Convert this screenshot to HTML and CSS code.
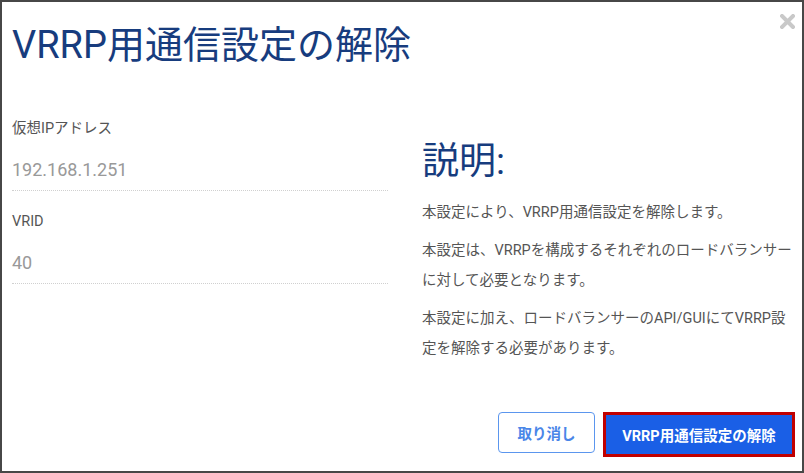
FILE: index.html
```html
<html>
<head>
<meta charset="UTF-8">
<meta name="viewport" content="width=device-width, initial-scale=1.0">
<title>VRRP用通信設定の解除</title>
<link rel="stylesheet" href="styles.css">
</head>
<body>
<div class="dialog">
  <div class="dialog-header">
    <h1 class="dialog-title">VRRP用通信設定の解除</h1>
    <button class="close-button" aria-label="閉じる">
      <svg width="15" height="15" viewBox="0 0 15 15">
        <path d="M2 2 L13 13 M13 2 L2 13" stroke="#c9c9c9" stroke-width="4" stroke-linecap="square"/>
      </svg>
    </button>
  </div>
  <div class="dialog-body">
    <div class="form-column">
      <div class="field">
        <label class="field-label">仮想IPアドレス</label>
        <div class="field-value">192.168.1.251</div>
      </div>
      <div class="field">
        <label class="field-label">VRID</label>
        <div class="field-value">40</div>
      </div>
    </div>
    <div class="help-column">
      <h2 class="help-title">説明:</h2>
      <p>本設定により、VRRP用通信設定を解除します。</p>
      <p>本設定は、VRRPを構成するそれぞれのロードバランサーに対して必要となります。</p>
      <p>本設定に加え、ロードバランサーのAPI/GUIにてVRRP設定を解除する必要があります。</p>
    </div>
  </div>
  <div class="dialog-footer">
    <button class="btn btn-cancel">取り消し</button>
    <button class="btn btn-primary">VRRP用通信設定の解除</button>
  </div>
</div>
</body>
</html>
```

FILE: styles.css
```css
body {
  margin: 0;
  padding: 0;
  font-family: Roboto, "Noto Sans CJK JP", sans-serif;
  background-color: #fff;
}

.dialog {
  box-sizing: border-box;
  height: 473px;
  border: 2px solid #474747;
  padding: 0 5px 0 10px;
  display: flex;
  flex-direction: column;
}

.dialog-header {
  display: flex;
  justify-content: space-between;
  align-items: flex-start;
  padding-right: 2px;
}

.dialog-title {
  margin: 20px 0 0 0;
  font-size: 38px;
  font-weight: 400;
  line-height: 46px;
  color: #173c7e;
}

.close-button {
  border: none;
  background: none;
  padding: 0;
  margin: 12px 0 0 0;
  width: 15px;
  height: 15px;
}

.dialog-body {
  display: grid;
  grid-template-columns: 376px 1fr;
  column-gap: 34px;
  flex: 1;
}

.form-column {
  padding-top: 51px;
}

.field {
  margin-bottom: 21px;
}

.field-label {
  display: block;
  font-size: 14.5px;
  color: #555;
  line-height: 20px;
}

.field-value {
  font-size: 18px;
  color: #999;
  line-height: 24px;
  padding: 19px 0 8px 0;
  border-bottom: 1px dotted #d0d0d0;
}

.help-column {
  padding-top: 72px;
}

.help-title {
  margin: 0 0 14px 0;
  font-size: 37px;
  font-weight: 400;
  line-height: 44px;
  color: #173c7e;
}

.help-column p {
  margin: 0 0 8px 0;
  font-size: 14.5px;
  line-height: 30px;
  color: #555;
}

.dialog-footer {
  display: flex;
  justify-content: flex-end;
  align-items: flex-start;
  gap: 8px;
  padding: 0 2px 14px 0;
}

.btn {
  font-family: Roboto, "Noto Sans CJK JP", sans-serif;
  font-size: 14.5px;
  font-weight: 700;
  cursor: pointer;
}

.btn-cancel {
  width: 97px;
  height: 41px;
  background-color: #fff;
  color: #4a86e8;
  border: 1px solid #5b96ee;
  border-radius: 4px;
}

.btn-primary {
  width: 192px;
  height: 45px;
  background-color: #1a5fe6;
  color: #fff;
  border: 3px solid #c00000;
}
```
